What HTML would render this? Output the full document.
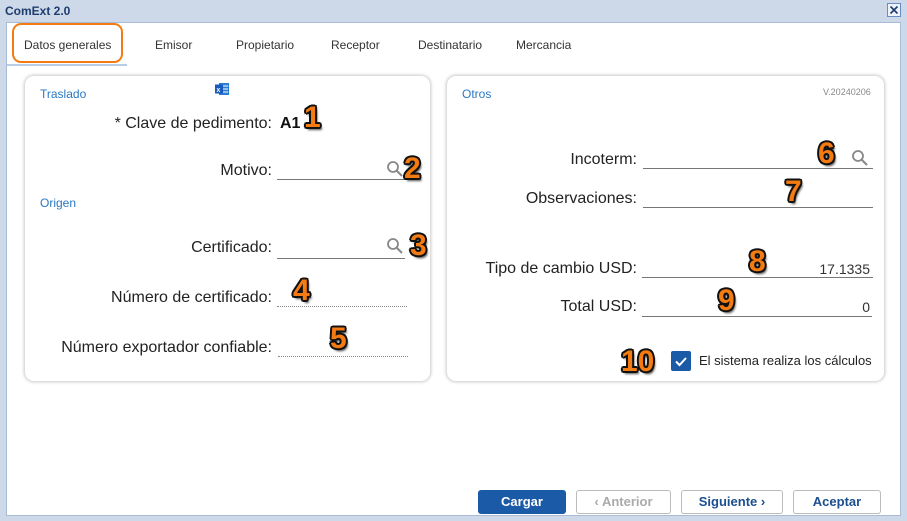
<!DOCTYPE html><html><head><style>
body{margin:0;width:907px;height:521px;background:#cdd8e8;font-family:"Liberation Sans",sans-serif;position:relative;overflow:hidden}
.a{position:absolute}
.title{left:5px;top:4px;font-size:12px;font-weight:bold;color:#1f3c6e}
.main{left:6px;top:22px;width:895px;height:494px;background:#fff;border:1px solid #a9bbd6;box-sizing:border-box}
.tab{top:38px;font-size:12px;color:#333}
.panel{background:#fff;border-radius:9px;box-shadow:0 0 3px 1px rgba(0,0,0,.22)}
.sec{font-size:12px;color:#2a78c2}
.lbl{font-size:16px;color:#222;text-align:right}
.line{border-bottom:1px solid #777;height:0}
.dot{border-bottom:1px dotted #888;height:0}
.n{font-size:30px;font-weight:bold;color:#f47b12;text-shadow:-2px 0 0 #111,2px 0 0 #111,0 -2px 0 #111,0 2px 0 #111,-1.5px -1.5px 0 #111,1.5px 1.5px 0 #111,-1.5px 1.5px 0 #111,1.5px -1.5px 0 #111,2px 3px 2px #555;line-height:1}
.btn{top:490px;height:24px;border:1px solid #bbb;border-radius:3px;box-sizing:border-box;font-size:13px;font-weight:bold;text-align:center;line-height:22px;background:#fff}
</style></head><body>
<div class="a title">ComExt 2.0</div>
<div class="a" style="left:887px;top:3px;width:14px;height:14px;border:1px solid #6a8cc0;box-sizing:border-box;background:#eef3fb"><svg width="12" height="12" style="position:absolute;left:0;top:0"><path d="M2.5 2.5L9.5 9.5M9.5 2.5L2.5 9.5" stroke="#1f3c6e" stroke-width="1.6"/></svg></div>
<div class="a main"></div>
<div class="a" style="left:7px;top:64px;width:120px;height:2px;background:#b7cde8"></div>
<div class="a" style="left:12px;top:23px;width:107px;height:36px;border:2.5px solid #f47b12;border-radius:9px"></div>
<div class="a tab" style="left:24px">Datos generales</div>
<div class="a tab" style="left:155px">Emisor</div>
<div class="a tab" style="left:236px">Propietario</div>
<div class="a tab" style="left:331px">Receptor</div>
<div class="a tab" style="left:418px">Destinatario</div>
<div class="a tab" style="left:516px">Mercancia</div>

<div class="a panel" style="left:25px;top:76px;width:405px;height:305px"></div>
<div class="a panel" style="left:447px;top:76px;width:437px;height:305px"></div>

<div class="a sec" style="left:40px;top:87px">Traslado</div>
<svg class="a" style="left:214px;top:82px" width="16" height="14"><rect x="5" y="1" width="10" height="12" fill="#2b7cd3"/><path d="M9 4h5M9 7h5M9 10h5" stroke="#fff" stroke-width="1"/><rect x="1" y="2.5" width="8" height="9" fill="#185abd"/><text x="2.5" y="10" font-size="7" font-weight="bold" fill="#fff" font-family="Liberation Sans">x</text></svg>
<div class="a lbl" style="right:635px;top:115px">* Clave de pedimento:</div>
<div class="a" style="left:280px;top:115px;font-size:16px;font-weight:bold;color:#111">A1</div>
<div class="a n" style="left:304px;top:103px">1</div>

<div class="a lbl" style="right:635px;top:162px">Motivo:</div>
<div class="a line" style="left:277px;top:179px;width:128px"></div>
<svg class="a" style="left:386px;top:160px" width="18" height="18"><circle cx="7" cy="7" r="5" fill="none" stroke="#888" stroke-width="1.8"/><path d="M11 11l5 5" stroke="#888" stroke-width="2"/></svg>
<div class="a n" style="left:404px;top:154px">2</div>

<div class="a sec" style="left:40px;top:196px">Origen</div>
<div class="a lbl" style="right:635px;top:239px">Certificado:</div>
<div class="a line" style="left:277px;top:258px;width:128px"></div>
<svg class="a" style="left:386px;top:237px" width="18" height="18"><circle cx="7" cy="7" r="5" fill="none" stroke="#888" stroke-width="1.8"/><path d="M11 11l5 5" stroke="#888" stroke-width="2"/></svg>
<div class="a n" style="left:410px;top:231px">3</div>

<div class="a lbl" style="right:635px;top:289px">Número de certificado:</div>
<div class="a dot" style="left:277px;top:306px;width:130px"></div>
<div class="a n" style="left:293px;top:276px">4</div>

<div class="a lbl" style="right:635px;top:339px">Número exportador confiable:</div>
<div class="a dot" style="left:278px;top:356px;width:130px"></div>
<div class="a n" style="left:330px;top:324px">5</div>

<div class="a sec" style="left:462px;top:87px">Otros</div>
<div class="a" style="left:823px;top:87px;font-size:9px;color:#888">V.20240206</div>

<div class="a lbl" style="right:270px;top:151px">Incoterm:</div>
<div class="a line" style="left:643px;top:168px;width:230px"></div>
<svg class="a" style="left:851px;top:149px" width="18" height="18"><circle cx="7" cy="7" r="5" fill="none" stroke="#888" stroke-width="1.8"/><path d="M11 11l5 5" stroke="#888" stroke-width="2"/></svg>
<div class="a n" style="left:818px;top:139px">6</div>

<div class="a lbl" style="right:270px;top:190px">Observaciones:</div>
<div class="a line" style="left:643px;top:207px;width:230px"></div>
<div class="a n" style="left:785px;top:177px">7</div>

<div class="a lbl" style="right:270px;top:260px">Tipo de cambio USD:</div>
<div class="a line" style="left:642px;top:277px;width:231px"></div>
<div class="a" style="right:37px;top:261px;font-size:14px;color:#333">17.1335</div>
<div class="a n" style="left:749px;top:247px">8</div>

<div class="a lbl" style="right:270px;top:298px">Total USD:</div>
<div class="a line" style="left:642px;top:316px;width:230px"></div>
<div class="a" style="right:37px;top:299px;font-size:14px;color:#333">0</div>
<div class="a n" style="left:718px;top:286px">9</div>

<div class="a n" style="left:621px;top:347px">10</div>
<div class="a" style="left:671px;top:351px;width:20px;height:20px;background:#1b5aa6;border-radius:2px"><svg width="20" height="20"><path d="M5 10.5l3.5 3.5L15 7" stroke="#fff" stroke-width="2" fill="none"/></svg></div>
<div class="a" style="left:699px;top:353px;font-size:13px;color:#222">El sistema realiza los cálculos</div>

<div class="a btn" style="left:478px;width:88px;background:#1b5aa6;border-color:#1b5aa6;color:#fff">Cargar</div>
<div class="a btn" style="left:576px;width:95px;color:#aaa">&lsaquo; Anterior</div>
<div class="a btn" style="left:681px;width:102px;color:#1b4f8f">Siguiente &rsaquo;</div>
<div class="a btn" style="left:793px;width:88px;color:#1b4f8f">Aceptar</div>
</body></html>
